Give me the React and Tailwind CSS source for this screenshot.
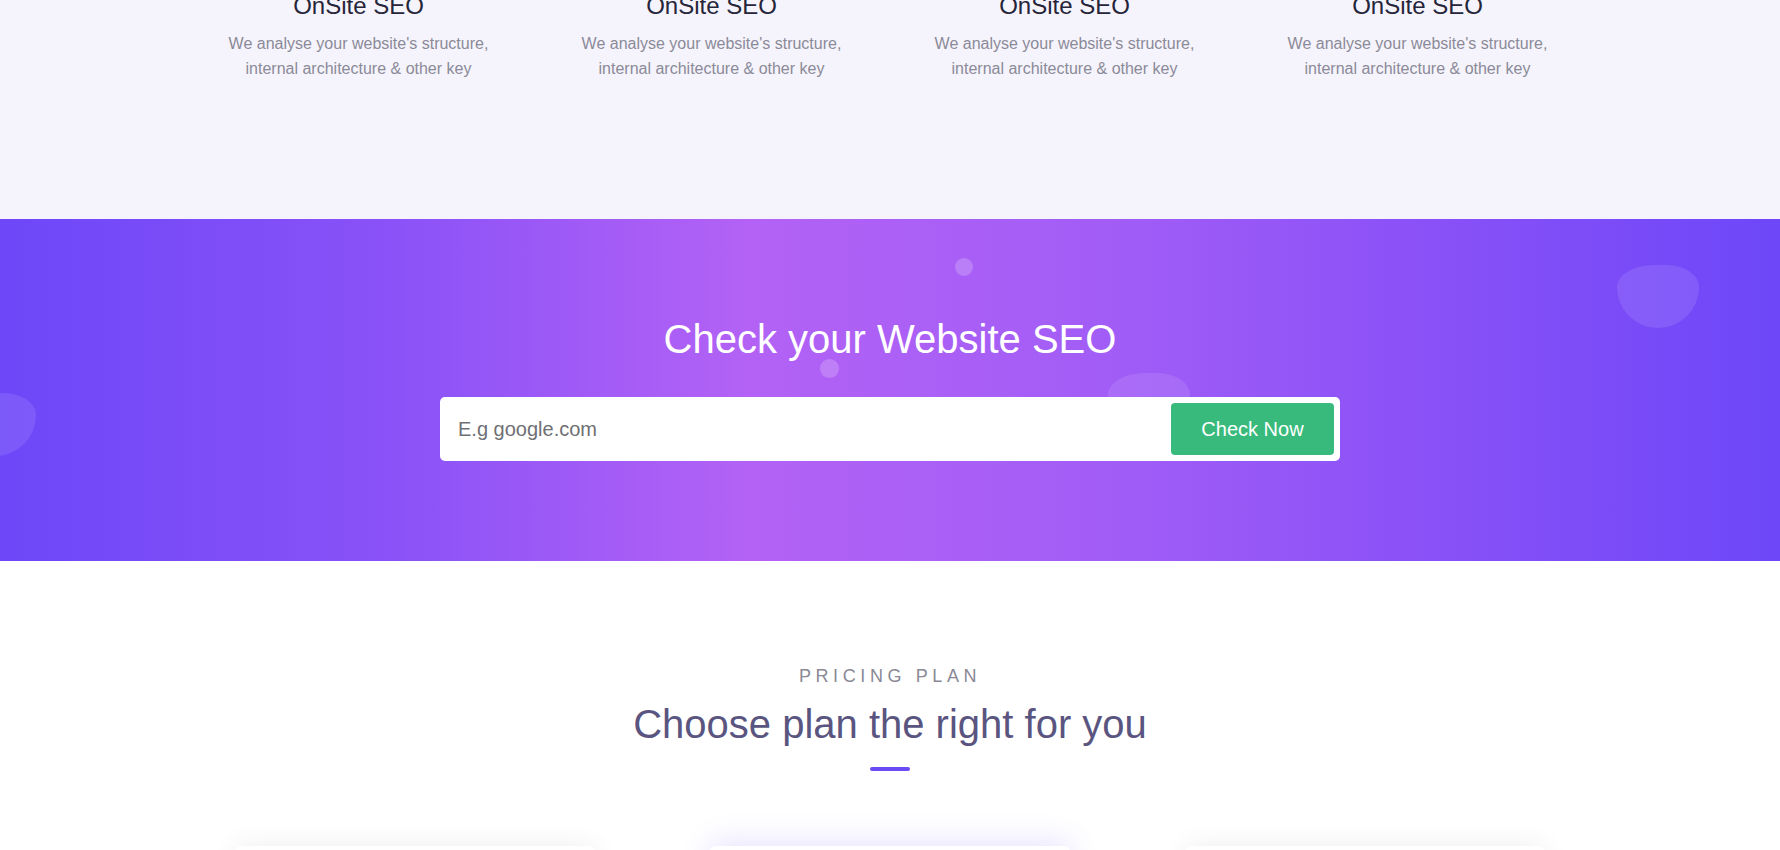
import React from 'react';

const features = [1, 2, 3, 4].map((id) => ({
  id,
  title: 'OnSite SEO',
  text: "We analyse your website's structure, internal architecture & other key",
}));

function FeatureRow() {
  return (
    <section className="flex h-[219px] flex-col bg-[#f5f4fc]">
      <div className="ml-[182px] w-[1412px] -mt-[9px] grid grid-cols-4">
        {features.map((f) => (
          <div key={f.id} className="px-[30px] text-center">
            <h3 className="text-[24px] leading-[29px] text-[#26253a]">{f.title}</h3>
            <p className="mt-[11px] text-[16px] leading-[25px] text-[#8b8a98]">{f.text}</p>
          </div>
        ))}
      </div>
    </section>
  );
}

// soft decorative shapes floating on the gradient band
const blob = 'absolute w-[82px] h-[63px] bg-white/10 rounded-[45%_40%_50%_50%/35%_35%_65%_65%]';

function SeoCheck() {
  return (
    <section className="relative h-[342px] overflow-hidden bg-[linear-gradient(90deg,#6d47f8_0%,#8a52f7_22%,#b362f5_42%,#a25df6_62%,#8a51f7_80%,#6d47f8_100%)]">
      <div className={`${blob} left-[1617px] top-[46px]`} />
      <div className={`${blob} left-[1108px] top-[154px]`} />
      <div className={`${blob} -left-[46px] top-[174px]`} />
      <div className="absolute left-[955px] top-[39px] h-[18px] w-[18px] rounded-full bg-white/20" />
      <div className="absolute left-[820px] top-[140px] h-[19px] w-[19px] rounded-full bg-white/20" />

      <div className="relative flex flex-col items-center pt-[96px]">
        <h2 className="text-[40px] leading-[48px] text-white">Check your Website SEO</h2>
        <div className="mt-[34px] flex h-[64px] w-[900px] items-center rounded-[5px] bg-white p-[6px]">
          <input
            type="text"
            placeholder="E.g google.com"
            className="h-full flex-1 bg-transparent pl-[12px] text-[20px] text-[#555] placeholder:text-[#6f6f74] outline-none"
          />
          <button className="h-[52px] w-[163px] rounded-[4px] bg-[#38ba7c] text-[20px] text-white">
            Check Now
          </button>
        </div>
      </div>
    </section>
  );
}

function Pricing() {
  return (
    <section className="bg-white pt-[103px]">
      <div className="flex flex-col items-center">
        <p className="text-[18px] leading-[24px] tracking-[4.6px] text-[#8a8995]">PRICING PLAN</p>
        <h2 className="mt-[12px] text-[40px] leading-[48px] text-[#5a5580]">Choose plan the right for you</h2>
        <span className="mt-[19px] h-[4px] w-[40px] rounded-full bg-[#6b4cf4]" />
      </div>

      {/* plan cards, only their tops are in view */}
      <div className="mt-[75px] flex justify-center gap-[115px]">
        <div className="h-[420px] w-[360px] rounded-[6px] bg-white shadow-[0_0_28px_rgba(30,30,60,0.07)]" />
        <div className="h-[420px] w-[360px] rounded-[6px] bg-white shadow-[0_-4px_30px_rgba(108,76,246,0.16)]" />
        <div className="h-[420px] w-[360px] rounded-[6px] bg-white shadow-[0_0_28px_rgba(30,30,60,0.07)]" />
      </div>
    </section>
  );
}

export default function App() {
  return (
    <div className="h-[850px] overflow-hidden bg-white font-['Liberation_Sans',Arial,sans-serif]">
      <FeatureRow />
      <SeoCheck />
      <Pricing />
    </div>
  );
}
